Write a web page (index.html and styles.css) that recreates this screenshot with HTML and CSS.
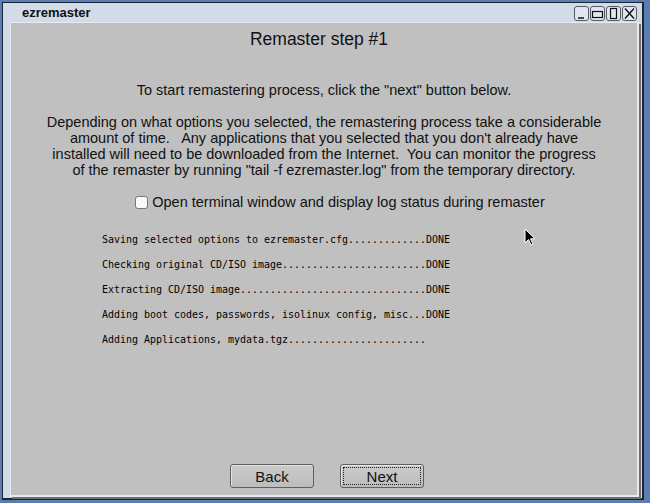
FILE: index.html
```html
<!DOCTYPE html>
<html lang="en">
<head>
    <meta charset="UTF-8">
    <title>ezremaster</title>
    <link rel="stylesheet" href="styles.css">
</head>
<body>
    <div class="window">
        <div class="titlebar">
            <span class="title">ezremaster</span>
            <div class="wm-buttons">
                <span class="wm-btn"><svg width="13" height="13" viewBox="0 0 13 13"><path d="M3 11h6" stroke="#111" stroke-width="1.5"/></svg></span>
                <span class="wm-btn"><svg width="13" height="13" viewBox="0 0 13 13"><rect x="1.5" y="4.5" width="10" height="6" fill="none" stroke="#111" stroke-width="1.2"/></svg></span>
                <span class="wm-btn"><svg width="13" height="13" viewBox="0 0 13 13"><rect x="3.5" y="1.5" width="6" height="10" fill="none" stroke="#111" stroke-width="1.2"/></svg></span>
                <span class="wm-btn"><svg width="13" height="13" viewBox="0 0 13 13"><path d="M2 1.5l9 10M11 1.5l-9 10" stroke="#111" stroke-width="1.4"/></svg></span>
            </div>
        </div>
        <div class="client">
            <h1>Remaster step #1</h1>

            <p class="intro">To start remastering process, click the "next" button below.</p>

            <p class="info">Depending on what options you selected, the remastering process take a considerable<br>
            amount of time.&nbsp;&nbsp; Any applications that you selected that you don't already have<br>
            installed will need to be downloaded from the Internet.&nbsp; You can monitor the progress<br>
            of the remaster by running "tail -f ezremaster.log" from the temporary directory.</p>

            <label class="check">
                <input type="checkbox">
                <span>Open terminal window and display log status during remaster</span>
            </label>

            <ul class="log">
                <li>Saving selected options to ezremaster.cfg.............DONE</li>
                <li>Checking original CD/ISO image........................DONE</li>
                <li>Extracting CD/ISO image...............................DONE</li>
                <li>Adding boot codes, passwords, isolinux config, misc...DONE</li>
                <li>Adding Applications, mydata.tgz.......................</li>
            </ul>

            <div class="nav">
                <button>Back</button>
                <button class="focused"><span>Next</span></button>
            </div>

            <svg class="cursor" width="12" height="19" viewBox="0 0 12 19">
                <path d="M1 1v14l3.5-3.5 2.5 5.5 2-1-2.5-5.2H11z" fill="#000" stroke="#fff" stroke-width="1"/>
            </svg>
        </div>
    </div>
</body>
</html>
```

FILE: styles.css
```css
* {
    margin: 0;
    padding: 0;
    box-sizing: border-box;
}

body {
    background: #5b7eb2;
    width: 650px;
    height: 503px;
    padding: 2px 0 0 2px;
    font-family: "Liberation Sans", Arial, sans-serif;
    color: #111;
    overflow: hidden;
}

.window {
    width: 642px;
    height: 498px;
    background: #d2dce8;
    border: 1px solid #1d2432;
    border-right: 2px solid #1d2432;
    border-bottom: 2px solid #1d2432;
    display: flex;
    flex-direction: column;
}

.titlebar {
    height: 18px;
    display: flex;
    align-items: center;
    justify-content: space-between;
    padding: 0 5px 0 19px;
}

.title {
    font-weight: bold;
    font-size: 13px;
    padding-top: 1px;
}

.wm-buttons {
    display: flex;
    margin-top: 2px;
}

.wm-btn {
    width: 15px;
    height: 15px;
    border: 1px solid #555b66;
    border-radius: 3px;
    background: #dfe6ee;
    display: flex;
    align-items: center;
    justify-content: center;
    margin-left: 1px;
}

.client {
    position: relative;
    flex: 1;
    margin: 1px 3px 1px 7px;
    background: #c0c0c0;
    border-top: 1px solid #e6ebf1;
    border-left: 1px solid #e6ebf1;
    border-right: 2px solid #e6ebf1;
    border-bottom: 2px solid #e6ebf1;
    box-shadow: 2px 2px 0 #6e6e6e;
    display: flex;
    flex-direction: column;
    align-items: center;
    text-align: center;
}

h1 {
    font-size: 17.5px;
    font-weight: normal;
    line-height: 20px;
    margin-top: 6px;
    margin-right: 10px;
}

.intro {
    font-size: 14.5px;
    line-height: 16px;
    margin-top: 33px;
}

.info {
    font-size: 14.5px;
    line-height: 16px;
    margin-top: 16px;
}

.check {
    display: flex;
    align-items: center;
    gap: 4px;
    font-size: 14.5px;
    line-height: 20px;
    margin-top: 14px;
    margin-left: 32px;
}

.check input {
    appearance: none;
    width: 13px;
    height: 13px;
    border: 1px solid #777;
    border-radius: 3px;
    background: #fafafa;
}

.log {
    list-style: none;
    align-self: flex-start;
    margin: 15px 0 0 91px;
    font-family: "DejaVu Sans Mono", "Liberation Mono", monospace;
    font-size: 9.97px;
    line-height: 25px;
    text-align: left;
    color: #000;
}

.log li {
    white-space: pre;
}

.nav {
    margin-top: auto;
    margin-bottom: 7px;
    display: flex;
    gap: 26px;
    margin-left: 6px;
}

button {
    width: 84px;
    height: 24px;
    font-family: "Liberation Sans", Arial, sans-serif;
    font-size: 15px;
    color: #111;
    background: linear-gradient(#cacaca, #bdbdbd);
    border: 1px solid #5f5f5f;
    border-radius: 3px;
    box-shadow: inset 1px 1px 0 #e4e4e4;
}

.focused {
    padding: 2px;
}

.focused span {
    display: block;
    height: 100%;
    line-height: 17px;
    border: 1px dotted #222;
}

.cursor {
    position: absolute;
    left: 513px;
    top: 205px;
}
```
